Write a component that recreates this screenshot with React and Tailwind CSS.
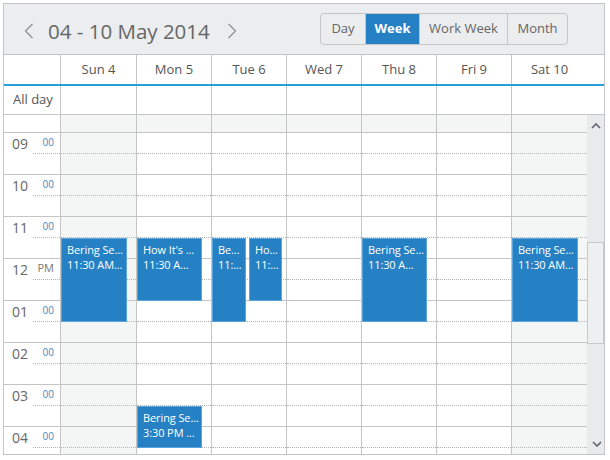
import { Fragment } from "react"

const font = { fontFamily: '"Open Sans", "Noto Sans", sans-serif' }

const days = [
  { label: "Sun 4", weekend: true, w: "w-[76px]" },
  { label: "Mon 5", w: "w-[75px]" },
  { label: "Tue 6", w: "w-[75px]" },
  { label: "Wed 7", w: "w-[75px]" },
  { label: "Thu 8", w: "w-[75px]" },
  { label: "Fri 9", w: "w-[75px]" },
  { label: "Sat 10", weekend: true, w: "w-[76px]" },
]

const hours = [
  { h: "09", m: "00" },
  { h: "10", m: "00" },
  { h: "11", m: "00" },
  { h: "12", m: "PM" },
  { h: "01", m: "00" },
  { h: "02", m: "00" },
  { h: "03", m: "00" },
  { h: "04", m: "00" },
]

// offsets are px inside the day column, top measured from the scroll viewport
const events = {
  0: [{ top: 123, height: 84, left: 0, width: 66, title: "Bering Se...", time: "11:30 AM..." }],
  1: [
    { top: 123, height: 63, left: 0, width: 65, title: "How It's ...", time: "11:30 A..." },
    { top: 291, height: 42, left: 0, width: 65, title: "Bering Se...", time: "3:30 PM ..." },
  ],
  2: [
    { top: 123, height: 84, left: 0, width: 34, title: "Be...", time: "11:..." },
    { top: 123, height: 63, left: 37, width: 33, title: "Ho...", time: "11:..." },
  ],
  4: [{ top: 123, height: 84, left: 0, width: 65, title: "Bering Se...", time: "11:30 A..." }],
  6: [{ top: 123, height: 84, left: 0, width: 66, title: "Bering Se...", time: "11:30 AM..." }],
}

const SLOTS = 16

function Chevron({ dir }) {
  return (
    <svg width="10" height="16" viewBox="0 0 10 16" className="shrink-0">
      <path
        d={dir === "left" ? "M8.5 1 L1.5 8 L8.5 15" : "M1.5 1 L8.5 8 L1.5 15"}
        fill="none"
        stroke="#8c8c8c"
        strokeWidth="1.2"
      />
    </svg>
  )
}

function Toolbar() {
  const views = [
    { label: "Day", w: "w-[44px]" },
    { label: "Week", w: "w-[54px]", active: true },
    { label: "Work Week", w: "w-[88px]" },
    { label: "Month", w: "w-[60px]" },
  ]
  return (
    <div className="h-[51px] bg-[#ebedef] border-b border-[#c5c5c5] flex items-start justify-between">
      <div className="flex items-center pl-[20px] pt-[14px]">
        <Chevron dir="left" />
        <span className="text-[20.5px] leading-[26px] text-[#676767] ml-[14px] mr-[17px]">04 - 10 May 2014</span>
        <Chevron dir="right" />
      </div>
      <div className="mt-[9px] mr-[36px] flex h-[32px] border border-[#c5c5c5] rounded-[4px] overflow-hidden">
        {views.map((v, i) => (
          <div
            key={v.label}
            className={`${v.w} flex items-center justify-center text-[13px] ${i > 0 ? "border-l border-[#c5c5c5]" : ""} ${
              v.active ? "bg-[#2581c4] text-white font-bold border-[#2581c4]" : "text-[#666]"
            }`}
          >
            {v.label}
          </div>
        ))}
      </div>
    </div>
  )
}

function HeaderRows() {
  return (
    <>
      <div className="flex h-[29px]">
        <div className="w-[56px]" />
        {days.map((d) => (
          <div key={d.label} className={`${d.w} border-l border-[#c5c5c5] flex items-center justify-center text-[13px] text-[#555]`}>
            {d.label}
          </div>
        ))}
        <div className="w-[17px]" />
      </div>
      <div className="h-[2px] bg-[#25a0da]" />
      <div className="flex h-[29px] border-b border-[#c5c5c5]">
        <div className="w-[56px] pl-[9px] pt-[4px] text-[13px] text-[#555]">All day</div>
        {days.map((d) => (
          <div key={d.label} className={`${d.w} border-l border-[#c5c5c5]`} />
        ))}
        <div className="w-[17px]" />
      </div>
    </>
  )
}

function TimeColumn() {
  return (
    <div className="w-[56px] shrink-0">
      <div className="h-[18px] border-b border-[#c5c5c5]" />
      {hours.map((hr) => (
        <div key={hr.h} className="h-[42px] border-b border-[#c5c5c5] flex">
          <div className="w-[29px] pl-[8px] pt-[1px] text-[14px] leading-[20px] text-[#666]">{hr.h}</div>
          <div className="flex-1">
            <div
              className={`h-[21px] border-b border-dotted border-[#b5b5b5] text-right pr-[6px] leading-[14px] pt-[2px] ${
                hr.m === "PM" ? "text-[11px] text-[#777]" : "text-[10px] text-[#4a86c0]"
              }`}
            >
              {hr.m}
            </div>
          </div>
        </div>
      ))}
    </div>
  )
}

function DayColumn({ day, index }) {
  const dayEvents = events[index] || []
  return (
    <div className={`${day.w} shrink-0 border-l border-[#c5c5c5] relative`}>
      <div className="h-[18px] border-b border-[#c5c5c5] bg-[#f4f5f5]" />
      {Array.from({ length: SLOTS }).map((_, i) => (
        <div
          key={i}
          className={`h-[21px] border-b ${
            i % 2 === 0 ? "border-dotted border-[#b5b5b5]" : "border-[#c5c5c5]"
          } ${day.weekend ? "bg-[#f4f5f5]" : "bg-white"}`}
        />
      ))}
      {dayEvents.map((ev, i) => (
        <div
          key={i}
          className="absolute bg-[#2581c4] border border-[#5aa5dc] text-white text-[11px] leading-[15px] tracking-[-0.1px] pl-[5px] pt-[3px] overflow-hidden whitespace-nowrap"
          style={{ top: ev.top, height: ev.height, left: ev.left, width: ev.width }}
        >
          <div>{ev.title}</div>
          <div>{ev.time}</div>
        </div>
      ))}
    </div>
  )
}

function Scrollbar() {
  return (
    <div className="w-[17px] shrink-0 bg-[#e9eaeb] relative">
      <svg width="10" height="6" viewBox="0 0 10 6" className="absolute left-[4px] top-[8px]">
        <path d="M1 5 L5 1 L9 5" fill="none" stroke="#5b6470" strokeWidth="1.6" />
      </svg>
      <div className="absolute left-0 right-0 top-[127px] h-[102px] bg-[#eeeff0] border border-[#c9c9c9]" />
      <svg width="10" height="6" viewBox="0 0 10 6" className="absolute left-[5px] top-[326px]">
        <path d="M1 1 L5 5 L9 1" fill="none" stroke="#5b6470" strokeWidth="1.6" />
      </svg>
    </div>
  )
}

export default function App() {
  return (
    <div className="w-[610px] h-[460px] bg-white pt-[3px] pl-[3px]" style={font}>
      <div className="w-[602px] h-[452px] border border-[#c5c5c5] flex flex-col overflow-hidden">
        <Toolbar />
        <HeaderRows />
        <div className="flex flex-1 min-h-0 overflow-hidden">
          <div className="flex flex-1 overflow-hidden">
            <TimeColumn />
            {days.map((d, i) => (
              <Fragment key={d.label}>
                <DayColumn day={d} index={i} />
              </Fragment>
            ))}
          </div>
          <Scrollbar />
        </div>
      </div>
    </div>
  )
}
